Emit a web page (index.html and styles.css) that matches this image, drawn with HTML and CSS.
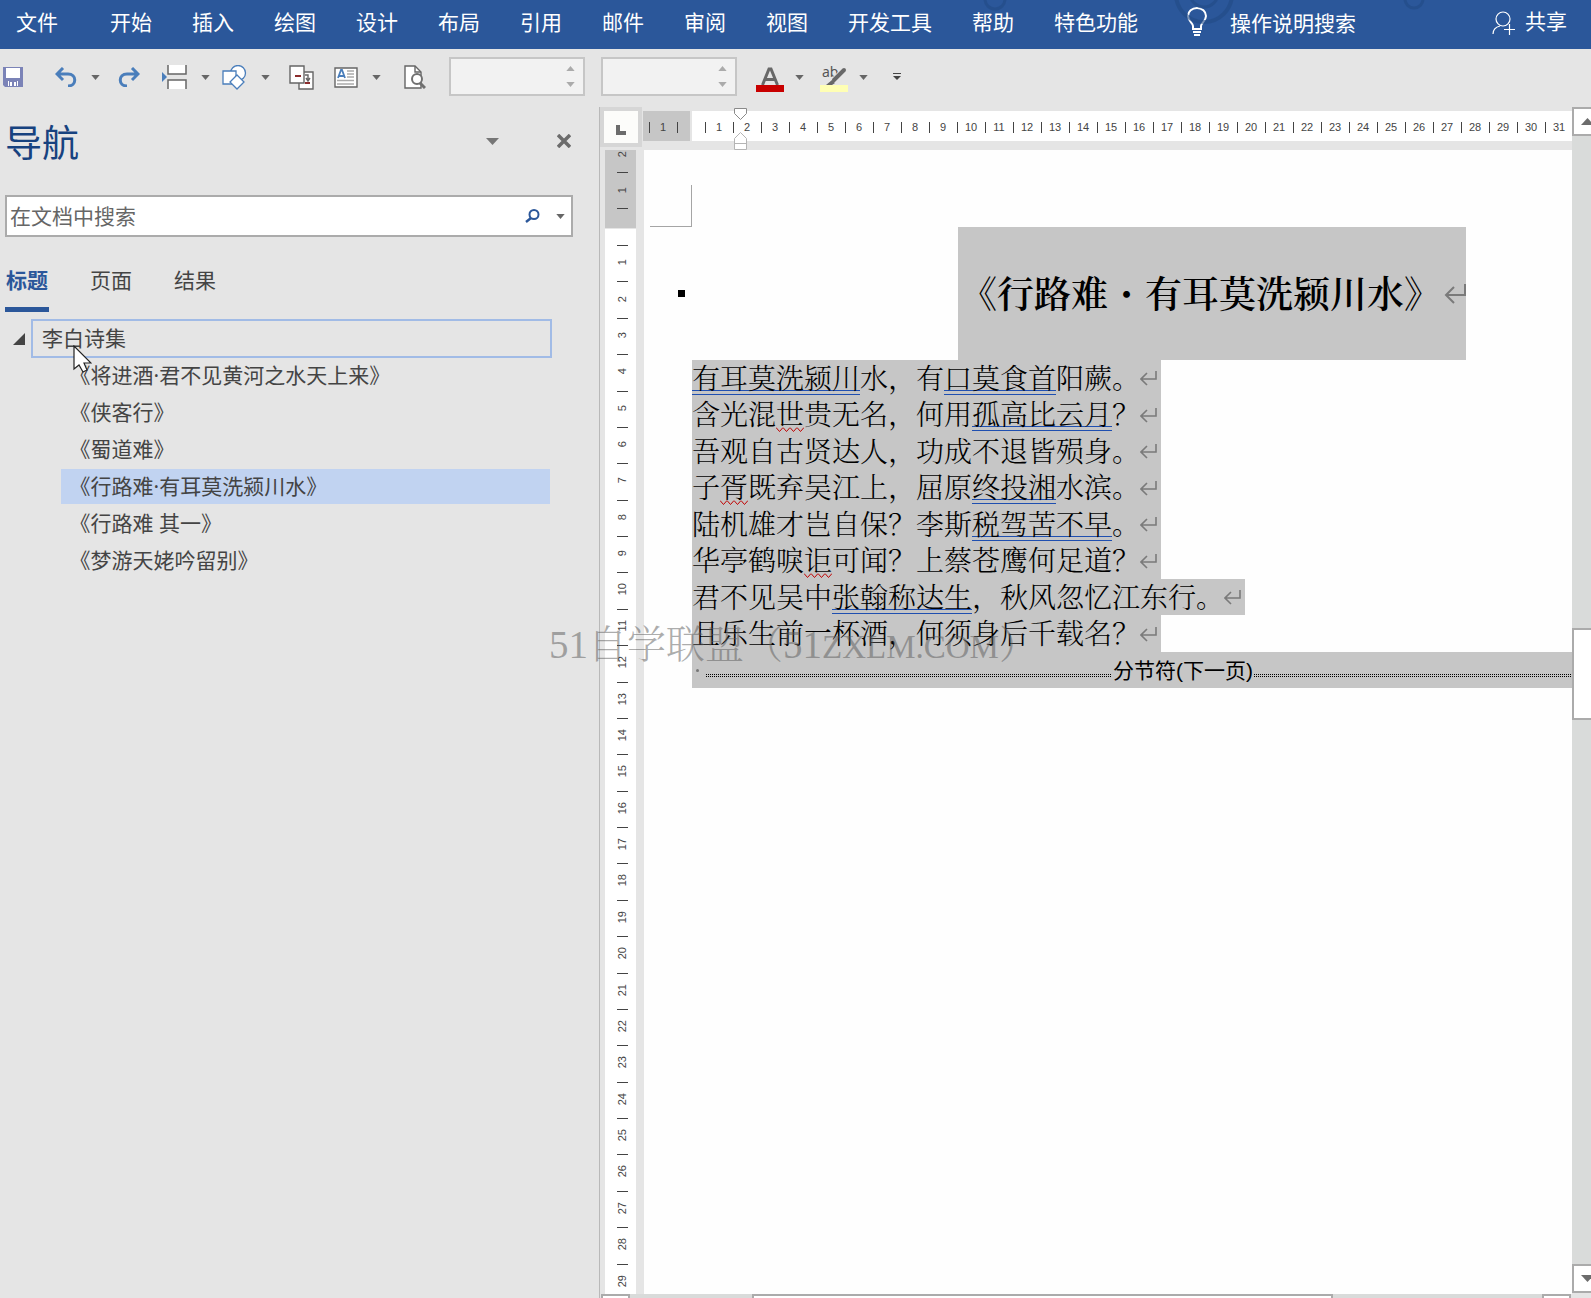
FILE: index.html
```html
<!DOCTYPE html>
<html lang="zh-CN">
<head>
<meta charset="utf-8">
<title>李白诗集</title>
<link rel="stylesheet" href="styles.css">
</head>
<body>
<svg class="defs" aria-hidden="true">
  <symbol id="down" viewBox="0 0 10 6"><path d="M0 0h10L5 6z" fill="currentColor"/></symbol>
  <symbol id="up" viewBox="0 0 10 6"><path d="M0 6h10L5 0z" fill="currentColor"/></symbol>
  <symbol id="return" viewBox="0 0 21 20"><path d="M16 3v8H1M7 5l-6 6 6 6" fill="none" stroke="#7a7a7a" stroke-width="1.6"/></symbol>
</svg>

<header class="ribbon">
  <svg class="ribbon-art" width="450" height="24" viewBox="0 0 450 24" fill="none" stroke="#224b86" aria-hidden="true">
    <circle cx="15" cy="-1" r="10" stroke-width="3"/><circle cx="224" cy="-6" r="28" stroke-width="4"/><circle cx="224" cy="-7" r="14" stroke-width="3"/><circle cx="434" cy="-1" r="9" stroke-width="3"/>
  </svg>
  <nav class="tabs">
    <button class="file-tab">文件</button>
    <button>开始</button><button>插入</button><button>绘图</button><button>设计</button><button>布局</button><button>引用</button><button>邮件</button><button>审阅</button><button>视图</button><button>开发工具</button><button>帮助</button><button>特色功能</button>
  </nav>
  <button class="tell-me">
    <svg width="22" height="30" viewBox="0 0 22 30" fill="none" stroke="#fff" stroke-width="2"><path d="M7 22v-3c0-3-5-5-5-10a9 8 0 0 1 18 0c0 5-5 7-5 10v3zM7 25h8" /><path d="M8 28h6"/></svg>
    操作说明搜索
  </button>
  <button class="share">
    <svg width="24" height="24" viewBox="0 0 24 24" fill="none" stroke="#fff" stroke-width="1.2"><circle cx="11" cy="8" r="7"/><path d="M1 23c0-5 3-7 7-8M12 18.500h11M17.500 13v11"/></svg>
    共享
  </button>
</header>

<div class="toolbar" role="toolbar">
  <button class="tool" aria-label="保存"><svg width="20" height="20" viewBox="0 0 20 20"><path d="M0 0h20v20H2l-2-2z" fill="#7b83b7"/><path d="M3 1h14v10H3zM5 14h10v5H5z" fill="#fff"/><path d="M6 14h8v5H6z" fill="#7b83b7"/><path d="M7 15h2v4H7zM11 15h2v4h-2z" fill="#fff"/></svg></button>
  <button class="tool undo" aria-label="撤消"><svg width="22" height="20" viewBox="0 0 22 20" fill="none" stroke="#4a7ebb" stroke-width="3"><path d="M8 1L2 7l6 6M2 7h11c9 0 9 12 0 12"/></svg></button>
  <button class="caret" aria-label="撤消选项"><svg width="9" height="5"><use href="#down"/></svg></button>
  <button class="tool redo" aria-label="恢复"><svg width="22" height="20" viewBox="0 0 22 20" fill="none" stroke="#4a7ebb" stroke-width="3"><path d="M14 1l6 6-6 6M20 7H9c-9 0-9 12 0 12"/></svg></button>
  <button class="tool break" aria-label="分隔符"><svg width="25" height="24" viewBox="0 0 25 24"><path d="M6 0v9h18V0M6 24v-9h18v9" fill="#fff" stroke="#666" stroke-width="1.500"/><path d="M0 7l5 5-5 5z" fill="#4a7ebb"/></svg></button>
  <button class="caret" aria-label="分隔符选项"><svg width="9" height="5"><use href="#down"/></svg></button>
  <button class="tool shapes" aria-label="形状"><svg width="25" height="25" viewBox="0 0 25 25" fill="#fff" stroke="#4a7ebb" stroke-width="1.300"><circle cx="16" cy="8" r="7.500"/><path d="M1 6h13v13H1z"/><path d="M15 10l7 7-7 7-7-7z"/></svg></button>
  <button class="caret" aria-label="形状选项"><svg width="9" height="5"><use href="#down"/></svg></button>
  <button class="tool compare" aria-label="比较"><svg width="25" height="25" viewBox="0 0 25 25" fill="#fff" stroke="#666" stroke-width="1.400"><path d="M10 7h14v17H10z"/><path d="M1 1h14v17H1z"/><path d="M16 10h3v5m-2-2l2 3 2-3" fill="none"/><path d="M6 11h6M16 18h5" stroke="#8c2d2d" stroke-width="2"/></svg></button>
  <button class="tool textbox" aria-label="文本框"><svg width="24" height="21" viewBox="0 0 24 21"><path d="M1 1h22v19H1z" fill="#fff" stroke="#666" stroke-width="1.400"/><path d="M4 11l3-8h1l3 8M5 9h5" fill="none" stroke="#4a7ebb" stroke-width="1.800"/><path d="M13 4h7M13 7h7M13 10h7M3 13.500h17M3 17h17" stroke="#aaa" stroke-width="1.300"/></svg></button>
  <button class="caret" aria-label="文本框选项"><svg width="9" height="5"><use href="#down"/></svg></button>
  <button class="tool preview" aria-label="打印预览"><svg width="22" height="24" viewBox="0 0 22 24" fill="none"><path d="M1 1h10l6 6v16H1z" fill="#fff" stroke="#666" stroke-width="1.400"/><path d="M11 1v6h6" stroke="#666" stroke-width="1.400"/><circle cx="13" cy="14" r="5" fill="#fff" stroke="#707070" stroke-width="2"/><path d="M16 18l5 5" stroke="#707070" stroke-width="3"/></svg></button>
  <div class="spinner">
    <input type="text" aria-label="缩进">
    <span class="steps"><button aria-label="增加"><svg width="9" height="5"><use href="#up"/></svg></button><button aria-label="减少"><svg width="9" height="5"><use href="#down"/></svg></button></span>
  </div>
  <div class="spinner">
    <input type="text" aria-label="间距">
    <span class="steps"><button aria-label="增加"><svg width="9" height="5"><use href="#up"/></svg></button><button aria-label="减少"><svg width="9" height="5"><use href="#down"/></svg></button></span>
  </div>
  <button class="tool color" aria-label="字体颜色"><svg width="28" height="26" viewBox="0 0 28 26"><path d="M6.500 19L13 3h2l6.500 16M9 13.500h10" fill="none" stroke="#686868" stroke-width="3"/><path d="M0 19h28v7H0z" fill="#c80000"/></svg></button>
  <button class="caret" aria-label="字体颜色选项"><svg width="9" height="5"><use href="#down"/></svg></button>
  <button class="tool highlight" aria-label="突出显示"><svg width="28" height="26" viewBox="0 0 28 26"><text x="2" y="11" class="ab">ab</text><path d="M24 4l-9 9M12.500 15L8 19" stroke="#e5e5e5" stroke-width="6"/><path d="M24 4L14 14" stroke="#686868" stroke-width="4" stroke-linecap="round"/><path d="M12 14l3 3-3 2H6z" fill="#686868"/><path d="M0 19h28v7H0z" fill="#ffffb4"/></svg></button>
  <button class="caret" aria-label="突出显示选项"><svg width="9" height="5"><use href="#down"/></svg></button>
  <button class="caret more" aria-label="自定义工具栏"><svg width="8" height="8" viewBox="0 0 8 8" fill="#444"><path d="M0 0h8v1H0zM0 3h8L4 7z"/></svg></button>
</div>

<div class="workspace">
  <aside class="navigation">
    <div class="nav-head">
      <h2>导航</h2>
      <button aria-label="任务窗格选项"><svg width="13" height="7" viewBox="0 0 13 7"><path d="M0 0h13L6.500 7z" fill="#767676"/></svg></button>
      <button aria-label="关闭"><svg width="14" height="14" viewBox="0 0 14 14"><path d="M1 1l12 12M13 1L1 13" stroke="#6c6c6c" stroke-width="3.500"/></svg></button>
    </div>
    <div class="search">
      <input type="text" placeholder="在文档中搜索" aria-label="在文档中搜索">
      <button aria-label="搜索"><svg width="15" height="14" viewBox="0 0 15 14" fill="none" stroke="#2b579a" stroke-width="2"><circle cx="9" cy="5.500" r="4.500"/><path d="M6 9l-5 4" stroke-width="2.500"/></svg></button>
      <button aria-label="搜索选项"><svg width="9" height="5"><use href="#down"/></svg></button>
    </div>
    <div class="nav-tabs">
      <button class="active">标题</button><button>页面</button><button>结果</button>
    </div>
    <div class="tree">
      <div class="root">
        <button class="toggle" aria-label="折叠"><svg width="12" height="12" viewBox="0 0 12 12"><path d="M12 0v12H0z" fill="#444"/></svg></button>
        <a href="#doc">李白诗集</a>
        <svg class="pointer" width="19" height="28" viewBox="0 0 19 28"><path d="M1 1v23l5-4 4 7 4-2-3-7h7z" fill="#fff" stroke="#222" stroke-width="1.200"/></svg>
      </div>
      <a class="leaf" href="#doc">《将进酒·君不见黄河之水天上来》</a>
      <a class="leaf" href="#doc">《侠客行》</a>
      <a class="leaf" href="#doc">《蜀道难》</a>
      <a class="leaf selected" href="#doc">《行路难·有耳莫洗颍川水》</a>
      <a class="leaf" href="#doc">《行路难 其一》</a>
      <a class="leaf" href="#doc">《梦游天姥吟留别》</a>
    </div>
  </aside>

  <main class="editor">
    <div class="view">
      <div class="ruler-row">
        <button class="tab-stop" aria-label="制表符"><svg width="10" height="10" viewBox="0 0 10 10"><path d="M0 0h4v6h6v4H0z" fill="#6c6c6c"/></svg></button>
        <div class="h-ruler">
          <div class="h-margin"><span>1</span><span></span></div>
          <div class="h-scale"><span>1</span><span>2</span><span>3</span><span>4</span><span>5</span><span>6</span><span>7</span><span>8</span><span>9</span><span>10</span><span>11</span><span>12</span><span>13</span><span>14</span><span>15</span><span>16</span><span>17</span><span>18</span><span>19</span><span>20</span><span>21</span><span>22</span><span>23</span><span>24</span><span>25</span><span>26</span><span>27</span><span>28</span><span>29</span><span>30</span><span>31</span></div>
          <svg class="indent" width="14" height="43" viewBox="0 0 14 43" fill="#fff" stroke="#8a8a8a"><path d="M.5.500h12v5l-6 6-6-6z"/><path d="M.5 41.500v-11l6-6 6 6v11zM.5 35.500h12" stroke="#b4b4b4"/></svg>
        </div>
      </div>
      <div class="canvas">
        <div class="v-ruler">
          <div class="v-margin"><span><b>2</b></span><span><b>1</b></span></div>
          <div class="v-scale"><span><b>1</b></span><span><b>2</b></span><span><b>3</b></span><span><b>4</b></span><span><b>5</b></span><span><b>6</b></span><span><b>7</b></span><span><b>8</b></span><span><b>9</b></span><span><b>10</b></span><span><b>11</b></span><span><b>12</b></span><span><b>13</b></span><span><b>14</b></span><span><b>15</b></span><span><b>16</b></span><span><b>17</b></span><span><b>18</b></span><span><b>19</b></span><span><b>20</b></span><span><b>21</b></span><span><b>22</b></span><span><b>23</b></span><span><b>24</b></span><span><b>25</b></span><span><b>26</b></span><span><b>27</b></span><span><b>28</b></span><span><b>29</b></span></div>
        </div>
        <article class="page" id="doc">
          <div class="crop"></div>
          <div class="title-row">
            <i class="mark"></i>
            <h1>《行路难<span class="dot">·</span>有耳莫洗颍川水》<svg width="25" height="24" viewBox="0 0 25 24"><path d="M24 4v11H5M13 7l-8 8 8 8" fill="none" stroke="#7a7a7a" stroke-width="2"/></svg></h1>
          </div>
          <div class="poem">
            <p><u>有耳莫洗颍川</u>水，有<u>口莫食首</u>阳蕨。<svg width="21" height="20"><use href="#return"/></svg></p>
            <p>含光混<em>世</em>贵无名，何用<u>孤高比云月</u>？<svg width="21" height="20"><use href="#return"/></svg></p>
            <p>吾观自古贤达人，功成不退皆殒身。<svg width="21" height="20"><use href="#return"/></svg></p>
            <p>子<em>胥</em>既弃吴江上，屈原<u>终投湘</u>水滨。<svg width="21" height="20"><use href="#return"/></svg></p>
            <p>陆机雄才岂自保？李斯<u>税驾苦不早</u>。<svg width="21" height="20"><use href="#return"/></svg></p>
            <p>华亭鹤唳<em>讵</em>可闻？上蔡苍鹰何足道？<svg width="21" height="20"><use href="#return"/></svg></p>
            <p>君不见吴中<u>张翰称达生</u>，秋风忽忆江东行。<svg width="21" height="20"><use href="#return"/></svg></p>
            <p>且乐生前一杯酒，何须身后千载名？<svg width="21" height="20"><use href="#return"/></svg></p>
          </div>
          <div class="section-break"><i class="space"></i><i class="dots"></i><span>分节符(下一页)</span><i class="dots rest"></i></div>
        </article>
      </div>
      <div class="h-scroll"><button aria-label="向左"></button><i class="before"></i><i class="thumb"></i><i class="after"></i><button aria-label="向右"></button></div>
    </div>
    <div class="v-scroll">
      <button aria-label="向上"><svg width="13" height="7" viewBox="0 0 13 7"><path d="M0 7h13L6.500 0z" fill="#6c6c6c"/></svg></button>
      <i class="before"></i><i class="thumb"></i><i class="after"></i>
      <button aria-label="向下"><svg width="13" height="7" viewBox="0 0 13 7"><path d="M0 0h13L6.500 7z" fill="#6c6c6c"/></svg></button>
    </div>
  </main>
</div>
<div class="watermark">51自学联盟（51<span>ZXLM.COM</span>）</div>
</body>
</html>
```

FILE: styles.css
```css
* { box-sizing: border-box; }
body {
  margin: 0;
  min-height: 100vh;
  display: flex;
  flex-direction: column;
  position: relative;
  overflow: hidden;
  background: #e5e5e5;
  color: #444;
  font: 21px/28px "Noto Sans", "Noto Sans CJK SC", sans-serif;
}
button, input {
  font: inherit;
  color: inherit;
  background: none;
  border: 0;
  padding: 0;
  margin: 0;
}
button { display: flex; align-items: center; justify-content: center; flex: none; white-space: nowrap; }
svg { display: block; flex: none; }
a { color: inherit; text-decoration: none; }
.defs { position: absolute; width: 0; height: 0; }

/* Ribbon */
.ribbon {
  position: relative;
  display: flex;
  align-items: center;
  height: 49px;
  padding: 0 24px 8px 16px;
  background: #2b579a;
  color: #fff;
  font-family: "Noto Sans CJK SC", sans-serif;
}
.ribbon-art { position: absolute; left: 980px; top: 0; opacity: .6; }
.tabs { display: flex; gap: 40px; }
.file-tab { margin-right: 12px; }
.tell-me { gap: 22px; margin-left: 48px; padding-top: 2px; }
.share { gap: 9px; margin-left: auto; padding-bottom: 2px; }
.share svg { margin-top: 6px; }

/* Quick access toolbar */
.toolbar { display: flex; align-items: center; height: 58px; padding: 0 0 2px 3px; }
.caret { color: #666; margin-left: 14px; }
.undo { margin-left: 32px; }
.redo { margin-left: 18px; }
.break { margin-left: 22px; }
.shapes { margin-left: 12px; }
.compare { margin-left: 19px; }
.textbox { margin-left: 20px; }
.preview { margin-left: 23px; }
.spinner {
  display: flex;
  width: 136px;
  height: 39px;
  margin: 0 0 2px 16px;
  border: 2px solid #c6c6c6;
  background: #f2f2f2;
}
.preview + .spinner { margin-left: 23px; }
.spinner input { flex: 1; min-width: 0; }
.steps { display: flex; flex-direction: column; justify-content: space-between; padding: 7px 8px; color: #ababab; }
.tool.color, .tool.highlight { padding-top: 4px; }
.color { margin-left: 19px; }
.color + .caret { margin-left: 11px; }
.highlight { margin-left: 16px; }
.highlight + .caret { margin-left: 11px; }
.caret.more { margin-left: 25px; }
.highlight svg { overflow: visible; }
.ab { font: 14px "Noto Sans", sans-serif; fill: #555; }

/* Navigation pane */
.workspace { flex: 1; display: flex; }
.navigation { width: 600px; flex: none; border-right: 1px solid #b9b9b9; }
.nav-head { display: flex; align-items: center; height: 72px; padding: 0 28px 4px 5px; gap: 58px; }
.nav-head h2 { flex: 1; margin: 0; font: 37px/48px "Noto Sans CJK SC", sans-serif; color: #17427f; }
.search {
  display: flex;
  align-items: center;
  gap: 16px;
  height: 42px;
  margin: 16px 26px 0 5px;
  padding: 0 6px 0 3px;
  background: #fff;
  border: 2px solid #ababab;
  color: #666;
}
.search input { flex: 1; min-width: 0; outline: 0; }
.search input::placeholder { color: #666; opacity: 1; }
.nav-tabs { display: flex; gap: 40px; padding: 29px 5px 0; }
.nav-tabs button { height: 46px; padding: 0 1px; border-bottom: 5px solid transparent; align-items: flex-start; }
.nav-tabs .active { color: #2b579a; font-weight: bold; border-color: #2b579a; }
.tree { padding: 7px 0; }
.root { position: relative; display: flex; align-items: center; height: 39px; padding: 0 47px 0 13px; gap: 6px; }
.root a { flex: 1; height: 39px; padding-left: 9px; line-height: 34px; border: 2px solid #a1bbe6; }
.pointer { position: absolute; left: 73px; top: 26px; }
.leaf {
  display: block;
  margin: 0 49px 2px 61px;
  padding-left: 19px;
  line-height: 35px;
  font-feature-settings: "halt";
}
.selected { background: #c1d3f1; }

/* Editor */
.editor { flex: 1; min-width: 0; display: flex; }
.view { flex: 1; min-width: 0; display: flex; flex-direction: column; overflow: hidden; }
.ruler-row { display: flex; height: 43px; }
.tab-stop { width: 42px; height: 40px; background: #fcfcfa; border: 4px solid #d6d6d6; padding: 6px 0 0 0; }
.h-ruler, .v-ruler { font: 11px/32px "Liberation Sans", sans-serif; color: #444; }
.h-ruler { position: relative; flex: 1; min-width: 0; display: flex; gap: 2px; height: 30px; margin: 4px 0 0 1px; }
.h-margin { display: flex; flex: none; width: 47px; padding-left: 6px; background: #c6c6c6; }
.h-scale { display: flex; flex: 1; min-width: 0; padding-left: 13px; background: #fff; overflow: hidden; }
.h-ruler span {
  flex: none;
  width: 28px;
  text-align: center;
  background: linear-gradient(#444, #444) 0 11px / 1px 11px no-repeat;
}
.h-margin span:last-child { width: 13px; }
.indent { position: absolute; left: 91px; top: -3px; }
.canvas { flex: 1; display: flex; gap: 8px; padding-left: 5px; }
.v-ruler { width: 31px; flex: none; display: flex; flex-direction: column; gap: 1px; overflow: hidden; }
.v-margin { height: 78px; overflow: hidden; background: #c6c6c6; display: flex; flex-direction: column; justify-content: flex-end; padding-bottom: 19px; }
.v-scale { flex: 1; display: flex; flex-direction: column; padding-top: 16px; margin-bottom: -6px; background: #fff; }
.v-ruler span { display: flex; align-items: center; justify-content: center; padding: 0 0 2px 2px; }
.v-ruler b { font-weight: normal; writing-mode: vertical-rl; transform: rotate(180deg); line-height: 12px; }
.v-margin span { flex: none; height: 36px; background: linear-gradient(#444, #444) 12px 35px / 11px 1px no-repeat; }
.v-scale span { flex: 1; background: linear-gradient(#444, #444) 12px 0 / 11px 1px no-repeat; }

/* Document */
.page {
  flex: 1;
  min-width: 0;
  overflow: hidden;
  background: #fefefe;
  color: #000;
  font-family: "Noto Serif CJK SC", "Noto Sans CJK SC", serif;
}
.crop { width: 42px; height: 42px; margin: 35px 0 0 6px; border: solid #a5a5a5; border-width: 0 1px 1px 0; }
.title-row { display: flex; align-items: center; padding-left: 34px; }
.mark { width: 7px; height: 7px; background: #000; }
h1 {
  display: flex;
  align-items: center;
  flex: none;
  height: 133px;
  margin: 0 0 0 273px;
  padding: 0 0 4px 2px;
  background: #c6c6c6;
  font-size: 37px;
  font-weight: 600;
  line-height: 48px;
  white-space: nowrap;
}
.dot { width: 37px; text-align: center; font-weight: 900; }
.poem { padding-left: 48px; display: flex; flex-direction: column; align-items: flex-start; }
.poem p {
  display: flex;
  height: 36px;
  margin: 0;
  background: #c6c6c6;
  font-size: 28px;
  font-weight: 300;
  line-height: 35px;
  white-space: nowrap;
}
.poem p:nth-child(even) { height: 37px; }
.poem svg { align-self: center; }
.poem u {
  height: 36px;
  text-decoration: none;
  background:
    linear-gradient(#1f4fb0, #1f4fb0) 0 30px / 100% 1px no-repeat,
    linear-gradient(#1f4fb0, #1f4fb0) 0 34px / 100% 1px no-repeat;
}
.poem em {
  height: 36px;
  font-style: normal;
  background: url("data:image/svg+xml,%3Csvg xmlns='http://www.w3.org/2000/svg' width='7' height='5'%3E%3Cpath d='M0 .5L3.500 4.500 7 .5' fill='none' stroke='%23c00000'/%3E%3C/svg%3E") 0 31px / 7px 5px repeat-x;
}
.section-break {
  display: flex;
  align-items: center;
  height: 36px;
  margin-left: 48px;
  padding-left: 4px;
  background: #c6c6c6;
  font: 21px/32px "Liberation Sans", "Noto Sans CJK SC", sans-serif;
  white-space: nowrap;
}
.section-break span { padding: 2px 1px 0; }
.space { width: 3px; height: 3px; margin-right: 7px; background: #777; border-radius: 2px; }
.dots {
  width: 406px;
  height: 3px;
  margin-top: 10px;
  background:
    repeating-linear-gradient(90deg, #000 0 1px, transparent 1px 2px) 0 0 / 100% 1px no-repeat,
    repeating-linear-gradient(90deg, #000 0 1px, transparent 1px 2px) 0 2px / 100% 1px no-repeat;
}
.dots.rest { flex: 1; }

/* Scroll bars */
.v-scroll { width: 19px; flex: none; display: flex; flex-direction: column; overflow: hidden; padding-bottom: 5px; }
.v-scroll button { width: 30px; height: 29px; background: #fff; border: 2px solid #ababab; }
.v-scroll i, .h-scroll i { background: #d9dbda; }
.v-scroll .before { flex: 492; }
.v-scroll .after { flex: 544; }
.v-scroll .thumb { width: 30px; height: 92px; background: #fff; border: 2px solid #ababab; }
.h-scroll { display: flex; height: 4px; padding: 0 1px; overflow: hidden; }
.h-scroll button { width: 29px; height: 29px; background: #fff; border: 2px solid #ababab; }
.h-scroll .before { flex: 123; }
.h-scroll .after { flex: 210; }
.h-scroll .thumb { flex: 579; height: 29px; background: #fff; border: 2px solid #ababab; }

.watermark {
  position: absolute;
  left: 549px;
  top: 620px;
  color: rgba(90, 90, 90, .5);
  font: 300 39px/50px "Liberation Serif", "Noto Serif CJK SC", "Noto Sans CJK SC", serif;
  white-space: nowrap;
  pointer-events: none;
}
.watermark span { font-size: 33px; }
```
